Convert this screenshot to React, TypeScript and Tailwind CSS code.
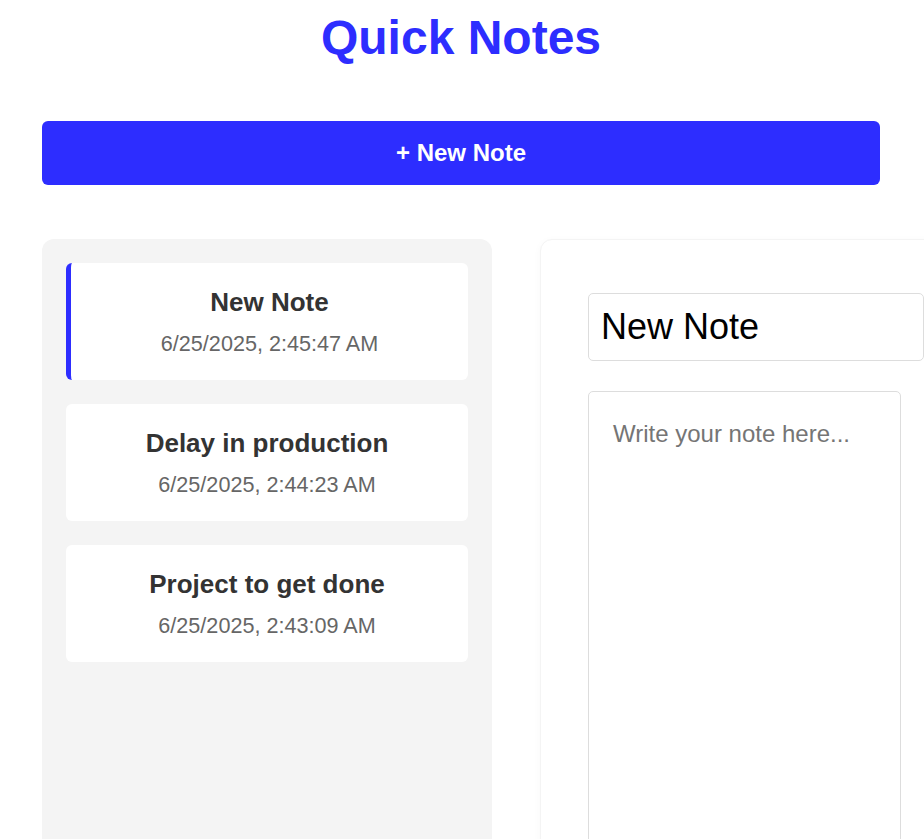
import React from "react";

const notes = [
  { title: "New Note", date: "6/25/2025, 2:45:47 AM", active: true },
  { title: "Delay in production", date: "6/25/2025, 2:44:23 AM", active: false },
  { title: "Project to get done", date: "6/25/2025, 2:43:09 AM", active: false },
];

export default function App() {
  return (
    <div
      className="h-screen w-full overflow-hidden bg-white"
      style={{ fontFamily: '"Liberation Sans", Arial, sans-serif' }}
    >
      <div className="ml-[42px] w-[838px] pt-[10px]">
        <h1 className="text-center text-[48px] leading-[55px] font-bold text-[#2d2dff]">
          Quick Notes
        </h1>
        <button className="mt-[56px] flex h-[64px] w-full items-center justify-center rounded-[6px] bg-[#2d2dff] text-[24px] font-bold text-white">
          + New Note
        </button>
        <div className="mt-[54px] flex gap-[48px]">
          <div className="flex h-[700px] w-[450px] shrink-0 flex-col gap-[24px] rounded-[12px] bg-[#f4f4f4] p-[24px]">
            {notes.map((n) => (
              <div
                key={n.title}
                className={
                  n.active
                    ? "rounded-[6px] border-l-[5px] border-[#2d2dff] bg-white py-[24px] text-center"
                    : "rounded-[6px] bg-white py-[24px] text-center"
                }
              >
                <div className="mb-[14px] text-[26px] leading-[30px] font-bold text-[#333333]">
                  {n.title}
                </div>
                <div className="text-[21.6px] leading-[25px] text-[#666666]">{n.date}</div>
              </div>
            ))}
          </div>
          <div className="h-[700px] w-[433px] shrink-0 rounded-[12px] border border-[#f4f4f4] bg-white pt-[53px] pl-[47px] shadow-[0_2px_8px_rgba(0,0,0,0.03)]">
            <input
              readOnly
              value="New Note"
              className="h-[68px] w-[336px] rounded-[5px] border border-[#dddddd] px-[12px] text-[36px] text-black outline-none"
              style={{ fontFamily: '"Liberation Sans", Arial, sans-serif' }}
            />
            <textarea
              readOnly
              placeholder="Write your note here..."
              className="mt-[30px] block h-[500px] w-[313px] resize-none rounded-[5px] border border-[#dddddd] p-[24px] text-[24px] leading-[1.5] text-black outline-none placeholder:text-[#757575]"
              style={{ fontFamily: '"Liberation Sans", Arial, sans-serif' }}
            />
          </div>
        </div>
      </div>
    </div>
  );
}
